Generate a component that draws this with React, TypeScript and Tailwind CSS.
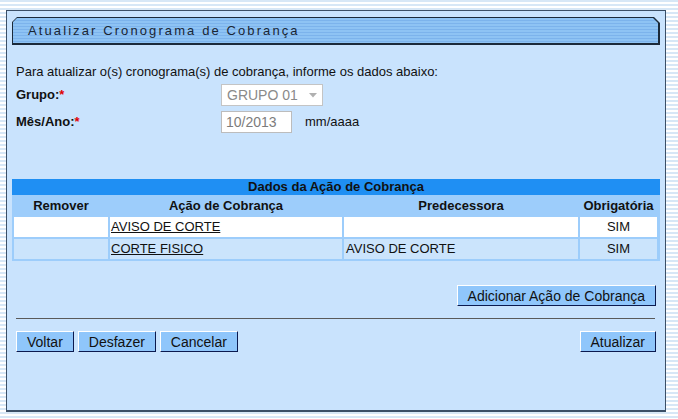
import React from "react";

const btn =
  "h-[21px] bg-[#8fc6fb] border border-t-white border-l-white border-r-[#0b1a4f] border-b-[#0b1a4f] px-[10px] text-[14px] leading-none text-[#111]";

export default function App() {
  return (
    <div className="w-[678px] h-[419px] overflow-hidden bg-[repeating-linear-gradient(180deg,#d7e7f6_0px,#d7e7f6_2px,#ffffff_2px,#ffffff_4px)] pt-[10px] pl-[6px] font-['Liberation_Sans',Arial,sans-serif] text-[13px] text-[#111]">
      <div className="w-[660px] h-[402px] bg-[#c9e3fd] border border-[#3b4f66] border-b-2 px-[5px] pt-[6px]">
        {/* Title bar */}
        <div className="w-[648px] h-[28px] bg-[#1b2a3a] pt-[1px] pl-[1px] pr-[2px] pb-[2px] [clip-path:polygon(5px_0,642px_0,648px_6px,648px_100%,0_100%,0_5px)]">
          <div className="h-full flex items-center pl-[15px] bg-[repeating-linear-gradient(180deg,#8ec3f4_0px,#8ec3f4_2px,#7cb3ec_2px,#7cb3ec_3px)] [clip-path:polygon(4px_0,640px_0,645px_5px,645px_100%,0_100%,0_4px)]">
            <span className="text-[13px] tracking-[2.1px] text-[#1a2634]">Atualizar Cronograma de Cobrança</span>
          </div>
        </div>

        {/* Form */}
        <div className="pl-[4px]">
          <div className="mt-[20px] h-[14px] leading-[14px]">
            Para atualizar o(s) cronograma(s) de cobrança, informe os dados abaixo:
          </div>
          <div className="mt-[5px] h-[22px] flex items-center">
            <div className="w-[205px] font-bold">
              Grupo:<span className="text-[#e00000]">*</span>
            </div>
            <div className="w-[102px] h-[22px] bg-white border border-[#c4c4c4] flex items-center justify-between pl-[5px] pr-[5px] text-[14px] text-[#8a8a8a]">
              <span>GRUPO 01</span>
              <svg width="8" height="5" viewBox="0 0 8 5">
                <path d="M0 0 L8 0 L4 4.5 Z" fill="#b0b0b0" />
              </svg>
            </div>
          </div>
          <div className="mt-[5px] h-[22px] flex items-center">
            <div className="w-[205px] font-bold">
              Mês/Ano:<span className="text-[#e00000]">*</span>
            </div>
            <div className="w-[71px] h-[22px] bg-white border border-[#bcbcbc] flex items-center pl-[4px] text-[14px] text-[#7c7c7c]">
              10/2013
            </div>
            <span className="ml-[13px]">mm/aaaa</span>
          </div>
        </div>

        {/* Table */}
        <div className="mt-[46px] w-[648px] bg-[#9dcdfb] pb-[2px]">
          <div className="h-[16px] bg-[#1f8ff3] text-center font-bold leading-[16px]">
            Dados da Ação de Cobrança
          </div>
          <div className="grid grid-cols-[94px_232px_234px_77px] gap-x-[2px] px-[2px] h-[21px] items-center text-center font-bold">
            <div>Remover</div>
            <div>Ação de Cobrança</div>
            <div>Predecessora</div>
            <div>Obrigatória</div>
          </div>
          <div className="grid grid-cols-[94px_232px_234px_77px] gap-[2px] px-[2px] mt-[1px]">
            <div className="h-[20px] bg-white"></div>
            <div className="h-[20px] bg-white flex items-center pl-[1px]">
              <span className="underline">AVISO DE CORTE</span>
            </div>
            <div className="h-[20px] bg-white"></div>
            <div className="h-[20px] bg-white flex items-center justify-center">SIM</div>

            <div className="h-[20px] bg-[#cbe4fc]"></div>
            <div className="h-[20px] bg-[#cbe4fc] flex items-center pl-[1px]">
              <span className="underline">CORTE FISICO</span>
            </div>
            <div className="h-[20px] bg-[#cbe4fc] flex items-center pl-[2px]">AVISO DE CORTE</div>
            <div className="h-[20px] bg-[#cbe4fc] flex items-center justify-center">SIM</div>
          </div>
        </div>

        <div className="mt-[24px] flex justify-end pr-[4px]">
          <button className={btn}>Adicionar Ação de Cobrança</button>
        </div>

        <div className="mt-[12px] ml-[4px] mr-[5px] h-[1px] bg-[#5a5a5a]"></div>

        <div className="mt-[12px] flex items-center pl-[4px] pr-[4px]">
          <div className="flex gap-[4px]">
            <button className={btn}>Voltar</button>
            <button className={btn}>Desfazer</button>
            <button className={btn}>Cancelar</button>
          </div>
          <div className="ml-auto">
            <button className={btn}>Atualizar</button>
          </div>
        </div>
      </div>
    </div>
  );
}
